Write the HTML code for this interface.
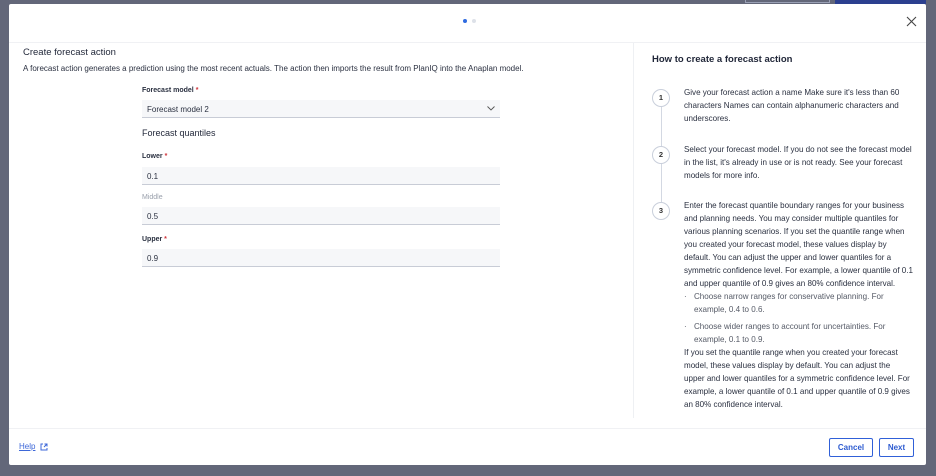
<!DOCTYPE html>
<html><head><style>
*{box-sizing:border-box;margin:0;padding:0}
body{width:936px;height:476px;background:#636779;font-family:"Liberation Sans",sans-serif;position:relative;overflow:hidden;color:#1f2537}
.a{position:absolute}
.modal{left:9px;top:4px;width:917px;height:461px;background:#fff;border-radius:2px}
.lbl{font-size:7px;font-weight:bold;color:#2a3040}
.req{color:#d0333a}
.inp{left:142px;width:358px;height:18px;background:#f6f7f9;border-bottom:1px solid #c8ccd6;font-size:8px;padding:5px 5px;color:#2a3040}
.step{width:18px;height:18px;border:1px solid #c9cfdb;border-radius:50%;background:#fff;font-size:7.5px;text-align:center;line-height:16px;color:#333;font-weight:bold}
.txt{left:684px;width:229px;font-size:8.05px;line-height:13px;color:#2a3040}
.btn{top:438px;height:19px;border:1px solid #3060d8;border-radius:2px;font-size:8px;font-weight:bold;color:#2d5bd0;text-align:center;line-height:17px;background:#fff}
</style></head><body>
<div class="a" style="left:745px;top:0;width:85px;height:3px;border:1px solid #9aa0b5;border-top:none"></div>
<div class="a" style="left:835px;top:0;width:91px;height:4px;background:#2b3f8f"></div>
<div class="a modal"></div>
<div class="a" style="left:463px;top:19px;width:4px;height:4px;border-radius:50%;background:#2f6be0"></div>
<div class="a" style="left:472px;top:19px;width:4px;height:4px;border-radius:50%;background:#dde1e8"></div>
<svg class="a" style="left:906px;top:16px" width="11" height="11" viewBox="0 0 11 11"><path d="M1 1L10 10M10 1L1 10" stroke="#444" stroke-width="1.1"/></svg>
<div class="a" style="left:9px;top:42px;width:917px;height:1px;background:#f0f1f4"></div>
<div class="a" style="left:23px;top:47px;font-size:9.5px;color:#1f2537">Create forecast action</div>
<div class="a" style="left:23px;top:64px;font-size:8px;color:#2a3040;white-space:nowrap">A forecast action generates a prediction using the most recent actuals. The action then imports the result from PlanIQ into the Anaplan model.</div>
<div class="a lbl" style="left:142px;top:87px">Forecast model <span class="req">*</span></div>
<div class="a inp" style="top:100px">Forecast model 2</div>
<svg class="a" style="left:487px;top:106px" width="8" height="5" viewBox="0 0 8 5"><path d="M0.5 0.5L4 4L7.5 0.5" stroke="#555" fill="none" stroke-width="0.9"/></svg>
<div class="a" style="left:142px;top:128px;font-size:9px;color:#1f2537">Forecast quantiles</div>
<div class="a lbl" style="left:142px;top:153px">Lower <span class="req">*</span></div>
<div class="a inp" style="top:167px">0.1</div>
<div class="a lbl" style="left:142px;top:194px;color:#9aa0ac;font-weight:normal">Middle</div>
<div class="a inp" style="top:207px">0.5</div>
<div class="a lbl" style="left:142px;top:236px">Upper <span class="req">*</span></div>
<div class="a inp" style="top:249px">0.9</div>
<div class="a" style="left:633px;top:43px;width:1px;height:375px;background:#eef0f3"></div>
<div class="a" style="left:652px;top:54px;font-size:9.5px;font-weight:bold;color:#1f2537">How to create a forecast action</div>
<div class="a" style="left:661px;top:105px;width:1px;height:100px;background:#d3d8e2"></div>
<div class="a step" style="left:652px;top:89px">1</div>
<div class="a step" style="left:652px;top:146px">2</div>
<div class="a step" style="left:652px;top:202px">3</div>
<div class="a txt" style="top:86px">Give your forecast action a name Make sure it's less than 60 characters Names can contain alphanumeric characters and underscores.</div>
<div class="a txt" style="top:143px">Select your forecast model. If you do not see the forecast model in the list, it's already in use or is not ready. See your forecast models for more info.</div>
<div class="a txt" style="top:199px">Enter the forecast quantile boundary ranges for your business and planning needs. You may consider multiple quantiles for various planning scenarios. If you set the quantile range when you created your forecast model, these values display by default. You can adjust the upper and lower quantiles for a symmetric confidence level. For example, a lower quantile of 0.1 and upper quantile of 0.9 gives an 80% confidence interval.
<div style="color:#555a66;padding-left:10px;position:relative;margin-bottom:4px"><span style="position:absolute;left:0">·</span>Choose narrow ranges for conservative planning. For example, 0.4 to 0.6.</div>
<div style="color:#555a66;padding-left:10px;position:relative"><span style="position:absolute;left:0">·</span>Choose wider ranges to account for uncertainties. For example, 0.1 to 0.9.</div>
If you set the quantile range when you created your forecast model, these values display by default. You can adjust the upper and lower quantiles for a symmetric confidence level. For example, a lower quantile of 0.1 and upper quantile of 0.9 gives an 80% confidence interval.</div>
<div class="a" style="left:9px;top:428px;width:917px;height:1px;background:#f0f1f4"></div>
<div class="a" style="left:19px;top:442px;font-size:8px;color:#3d67d8;text-decoration:underline">Help</div>
<svg class="a" style="left:40px;top:443px" width="8" height="8" viewBox="0 0 8 8"><path d="M3 1H1V7H7V5M4 4L7 1M4.5 1H7V3.5" stroke="#3d67d8" fill="none" stroke-width="1"/></svg>
<div class="a btn" style="left:829px;width:44px">Cancel</div>
<div class="a btn" style="left:879px;width:35px">Next</div>
</body></html>
